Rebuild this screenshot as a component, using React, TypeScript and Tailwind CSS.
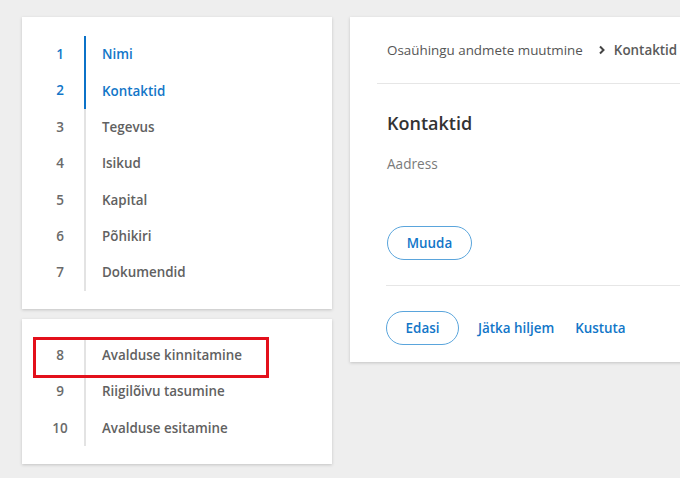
import React from "react";

const steps1 = [
  { n: "1", label: "Nimi", active: true },
  { n: "2", label: "Kontaktid", active: true },
  { n: "3", label: "Tegevus" },
  { n: "4", label: "Isikud" },
  { n: "5", label: "Kapital" },
  { n: "6", label: "Põhikiri" },
  { n: "7", label: "Dokumendid" },
];
const steps2 = [
  { n: "8", label: "Avalduse kinnitamine" },
  { n: "9", label: "Riigilõivu tasumine" },
  { n: "10", label: "Avalduse esitamine" },
];

function Row({ n, label, active }: { n: string; label: string; active?: boolean }) {
  return (
    <div className="flex h-[36.4px] items-center">
      <div
        className={`w-[48px] text-center text-[13.5px] font-semibold ${active ? "text-[#1276c8]" : "text-[#6a6a6a]"}`}
      >
        {n}
      </div>
      <div
        className={`flex h-full items-center border-l-2 pl-[16px] text-[13.4px] font-semibold ${
          active ? "border-[#0b72c8] text-[#1276c8]" : "border-[#e3e3e3] text-[#616161]"
        }`}
      >
        {label}
      </div>
    </div>
  );
}

export default function App() {
  return (
    <div
      className="flex h-[478px] w-[680px] gap-[18px] overflow-hidden bg-[#eeeeee] pl-[22px] pt-[17px]"
      style={{ fontFamily: '"Open Sans", "Noto Sans", sans-serif' }}
    >
      <div className="flex w-[310px] shrink-0 flex-col gap-[10px]">
        <div className="bg-white pb-[18px] pl-[14px] pt-[19px] shadow-[0_1px_3px_rgba(0,0,0,0.18)]">
          {steps1.map((s) => (
            <Row key={s.n} {...s} />
          ))}
        </div>
        <div className="relative bg-white pb-[18px] pl-[14px] pt-[18px] shadow-[0_1px_3px_rgba(0,0,0,0.18)]">
          {steps2.map((s) => (
            <Row key={s.n} {...s} />
          ))}
          <div className="absolute left-[11px] top-[18px] h-[41px] w-[236px] border-[3px] border-[#e3101b]" />
        </div>
      </div>
      <div className="h-[345px] w-[360px] shrink-0 bg-white shadow-[0_1px_3px_rgba(0,0,0,0.18)]">
        <div className="ml-[27px] flex h-[67px] items-center whitespace-nowrap border-b border-[#e6e6e6] pl-[10px] text-[13.4px] text-[#555555]">
          <span>Osaühingu andmete muutmine</span>
          <svg className="ml-[15px] mr-[8px] shrink-0" width="8" height="10" viewBox="0 0 8 10">
            <path d="M2 1.5 L5.5 5 L2 8.5" stroke="#444" strokeWidth="2" fill="none" />
          </svg>
          <span className="font-semibold text-[#5a5a5a]">Kontaktid</span>
        </div>
        <div className="pl-[37px] pt-[27px]">
          <div className="text-[18px] font-semibold leading-[24px] text-[#333333]">Kontaktid</div>
          <div className="mt-[19px] text-[13.6px] leading-[20px] text-[#7a7a7a]">Aadress</div>
          <button className="mt-[52px] flex h-[34px] w-[85px] items-center justify-center rounded-full border-[1.5px] border-[#5aa5dc] text-[13.4px] font-semibold text-[#1276c8]">
            Muuda
          </button>
        </div>
        <div className="ml-[36px] mt-[25px] border-t border-[#e6e6e6] pt-[25px]">
          <div className="flex items-center">
            <button className="flex h-[34px] w-[73px] items-center justify-center rounded-full border-[1.5px] border-[#5aa5dc] text-[13.4px] font-semibold text-[#1276c8]">
              Edasi
            </button>
            <span className="ml-[19px] text-[13.4px] font-semibold text-[#1276c8]">Jätka hiljem</span>
            <span className="ml-[21px] text-[13.4px] font-semibold text-[#1276c8]">Kustuta</span>
          </div>
        </div>
      </div>
    </div>
  );
}
